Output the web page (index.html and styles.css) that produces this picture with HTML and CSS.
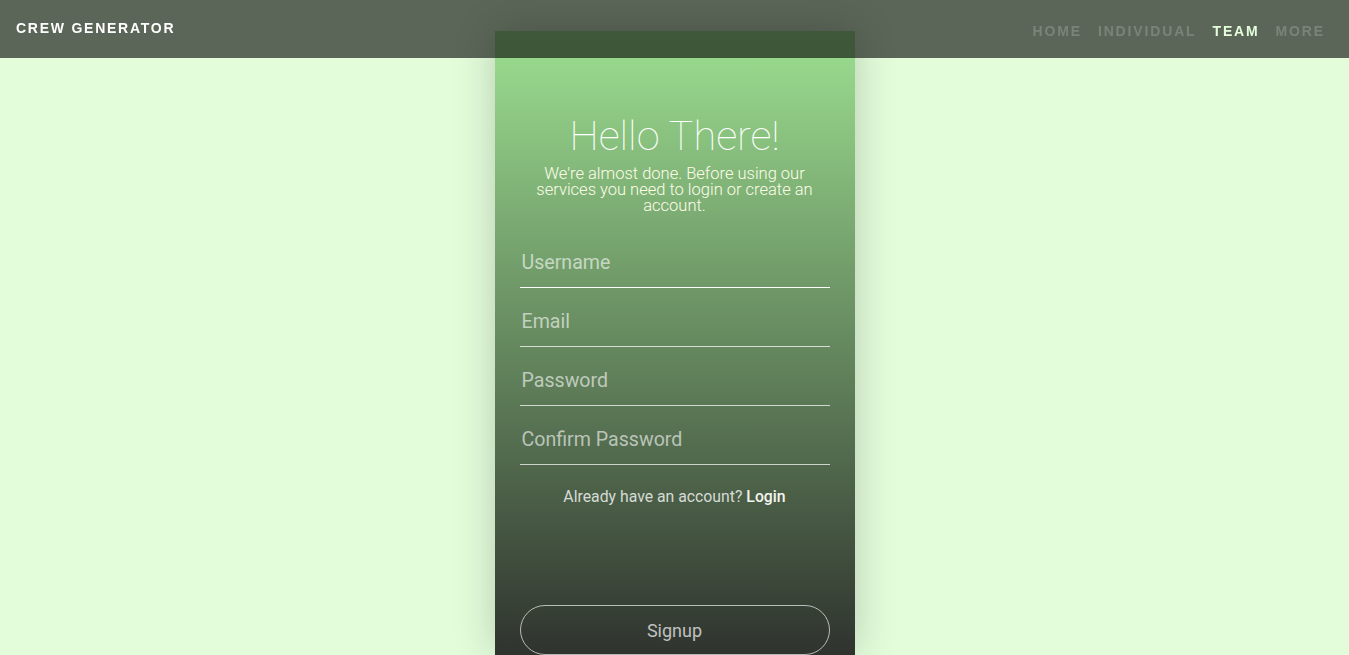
FILE: index.html
```html
<!DOCTYPE html>
<html lang="en">
<head>
<meta charset="utf-8">
<title>Crew Generator</title>
<link rel="stylesheet" href="styles.css">
</head>
<body>
<header class="topbar">
  <div class="brand">CREW GENERATOR</div>
  <nav class="nav">
    <a class="nav-link" href="#">HOME</a>
    <a class="nav-link" href="#">INDIVIDUAL</a>
    <a class="nav-link nav-link-active" href="#">TEAM</a>
    <a class="nav-link" href="#">MORE</a>
  </nav>
</header>
<main class="page">
  <section class="card">
    <h1 class="title">Hello There!</h1>
    <p class="subtitle">We're almost done. Before using our services you need to login or create an account.</p>
    <form class="form">
      <input class="field field-focus" type="text" placeholder="Username">
      <input class="field" type="email" placeholder="Email">
      <input class="field" type="password" placeholder="Password">
      <input class="field" type="password" placeholder="Confirm Password">
      <p class="switch">Already have an account? <a class="switch-link" href="#">Login</a></p>
      <button class="signup" type="button">Signup</button>
    </form>
  </section>
</main>
</body>
</html>
```
FILE: styles.css
```css
html, body {
  margin: 0;
  padding: 0;
  height: 100%;
  overflow: hidden;
}
body {
  background: #e3fddb;
  font-family: Roboto, "Noto Sans", sans-serif;
}
.topbar {
  position: fixed;
  top: 0;
  left: 0;
  right: 0;
  height: 58px;
  background: rgba(0, 0, 0, 0.6);
  z-index: 10;
  display: flex;
  justify-content: space-between;
  align-items: flex-start;
  padding: 0 24px 0 16px;
  box-sizing: border-box;
  font-family: "Liberation Sans", Arial, sans-serif;
  font-weight: bold;
  font-size: 14px;
  line-height: 16px;
}
.brand {
  color: #ffffff;
  padding-top: 20px;
  letter-spacing: 1.75px;
}
.nav {
  display: flex;
  gap: 16px;
  padding-top: 23px;
  letter-spacing: 1.85px;
}
.nav-link {
  color: rgba(255, 255, 255, 0.19);
  text-decoration: none;
}
.nav-link-active {
  color: #e3fddb;
}
.page {
  display: flex;
  justify-content: center;
  padding-top: 31px;
}
.card {
  width: 360px;
  box-sizing: border-box;
  padding: 80px 25px 0;
  background: linear-gradient(to bottom, #9cdf90 0%, #2f332e 100%);
  box-shadow: 0 0 40px rgba(0, 0, 0, 0.2);
  text-align: center;
}
.title {
  margin: 0 0 6px;
  font-size: 41.5px;
  line-height: 49px;
  font-weight: 100;
  color: #ffffff;
}
.subtitle {
  margin: 0;
  font-size: 16.5px;
  line-height: 16px;
  font-weight: 300;
  color: #fffdea;
}
.form {
  display: flex;
  flex-direction: column;
  margin-top: 15px;
}
.field {
  display: block;
  width: 100%;
  height: 59px;
  box-sizing: border-box;
  margin: 0;
  padding: 9px 2px 0;
  border: none;
  border-bottom: 1px solid rgba(255, 255, 255, 0.72);
  background: transparent;
  font-family: Roboto, "Noto Sans", sans-serif;
  font-size: 19.6px;
  color: #ffffff;
  outline: none;
}
.field::placeholder {
  color: rgba(255, 255, 255, 0.6);
}
.field-focus {
  border-bottom-color: #ffffff;
}
.switch {
  margin: 22px 0 0;
  font-size: 15.8px;
  line-height: 19px;
  color: rgba(255, 255, 255, 0.78);
}
.switch-link {
  color: #f2f4ef;
  font-weight: 500;
  text-decoration: none;
}
.signup {
  margin-top: 99px;
  height: 50px;
  width: 100%;
  border: 1px solid rgba(255, 255, 255, 0.65);
  border-radius: 25px;
  background: transparent;
  font-family: Roboto, "Noto Sans", sans-serif;
  font-size: 18px;
  color: rgba(255, 255, 255, 0.7);
  cursor: pointer;
}
```
